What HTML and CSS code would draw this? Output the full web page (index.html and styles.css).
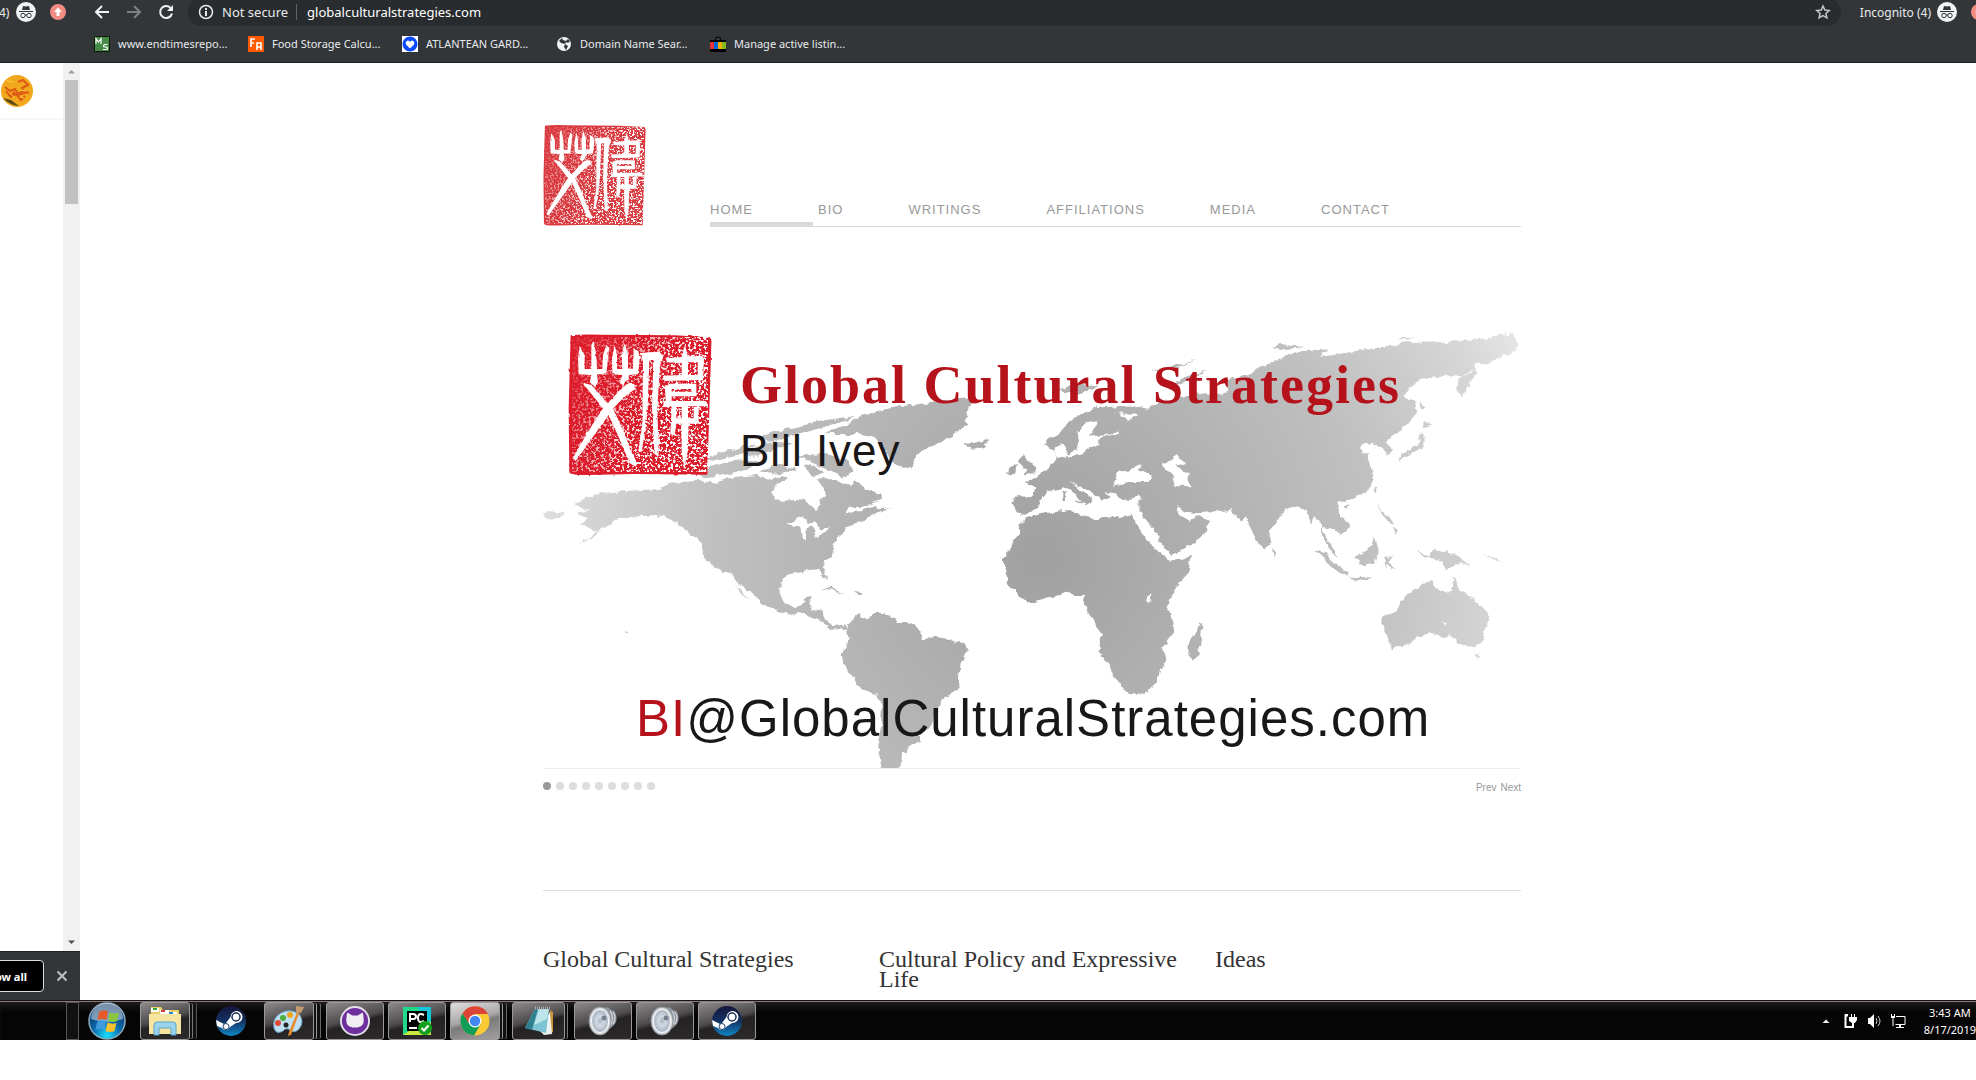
FILE: index.html
```html
<!DOCTYPE html>
<html lang="en">
<head>
<meta charset="utf-8">
<title>Global Cultural Strategies</title>
<link rel="stylesheet" href="styles.css">
</head>
<body>
<svg class="defs" aria-hidden="true">
  <defs>
    <filter id="grain" x="0" y="0" width="100%" height="100%">
      <feTurbulence type="fractalNoise" baseFrequency="0.13" numOctaves="3" seed="8" result="n"/>
      <feColorMatrix in="n" type="matrix" values="0 0 0 0 1  0 0 0 0 1  0 0 0 0 1  9 0 0 0 -4.6"/>
    </filter>
    <filter id="rough" x="-5%" y="-5%" width="110%" height="110%">
      <feTurbulence type="fractalNoise" baseFrequency="0.06" numOctaves="2" seed="3"/>
      <feDisplacementMap in="SourceGraphic" scale="7" xChannelSelector="R" yChannelSelector="G"/>
    </filter>
    <linearGradient id="fade" x1="0" y1="0" x2="1" y2="0.5">
      <stop offset="0.1" stop-color="#fff" stop-opacity="0.15"/>
      <stop offset="0.75" stop-color="#fff"/>
    </linearGradient>
    <mask id="fadeMask"><rect width="432" height="426" fill="url(#fade)"/></mask>
    <symbol id="seal" viewBox="0 0 432 426">
      <path filter="url(#rough)" fill="currentColor" d="M8 4 Q40 0 100 2 L320 4 L424 10 Q432 14 430 30 L424 230 L418 422 L200 420 L60 423 Q4 424 4 414 L2 220Z"/>
      <g mask="url(#fadeMask)"><rect x="12" y="10" width="408" height="404" filter="url(#grain)"/></g>
      <g filter="url(#rough)" transform="translate(-25 -27)" fill="#fff">
        <path d="M60 62L55 100 57 148 95 150 90 172 106 185 115 172 112 148 140 148 145 100 148 68 140 60 130 90 128 132 112 132 110 90 102 48 95 60 95 132 75 132 75 90Z"/>
        <path d="M165 60L157 100 158 148 188 150 180 175 195 180 208 150 235 148 240 100 236 78 222 70 220 132 205 132 205 90 195 52 186 90 188 132 172 132 172 90Z"/>
        <path d="M68 173L95 180 145 235Q170 205 200 178L224 176 226 193Q190 215 160 252 190 310 215 380 232 405 230 425L210 415Q180 340 147 270 90 350 48 408L38 402Q90 310 130 250Z"/>
        <path d="M240 84L300 80 311 95 301 120 293 250 297 390 285 388 277 250 281 105 269 105 264 250 257 320 245 382 236 378 248 300 250 110Z"/>
        <path d="M376 60L385 95 424 92 433 100 430 165 314 168 312 152 366 150 366 114 320 112 322 100 366 96ZM385 112V150H414V112Z"/>
        <path d="M316 185L330 176H410V214H336V228H442V244H385V280H402V246H417V296H387L384 380 374 430 366 380V296H350L345 330 332 328 336 246H310L312 230 318 228ZM336 192V200H396V192ZM350 246V280H366V246Z"/>
      </g>
    </symbol>
    <symbol id="incognito" viewBox="0 0 20 20">
      <circle cx="10" cy="10" r="10" fill="#f1f3f4"/>
      <path d="M3 9h14v1H3zM6 8l1-4 3 .6L13 4l1 4z" fill="#323639"/>
      <g fill="none" stroke="#323639"><circle cx="7" cy="13.500" r="2.200"/><circle cx="13" cy="13.500" r="2.200"/><path d="M9 13h2"/></g>
    </symbol>
    <symbol id="update" viewBox="0 0 16 16">
      <circle cx="8" cy="8" r="8" fill="#f28b82"/>
      <path d="M8 3.500 12 8H9.500v4h-3V8H4z" fill="#fff"/>
    </symbol>
    <linearGradient id="steamFill" x1="0" y1="0" x2="0" y2="1">
      <stop offset="0" stop-color="#14173a"/><stop offset="0.5" stop-color="#123263"/><stop offset="1" stop-color="#0f86c4"/>
    </linearGradient>
    <symbol id="steam" viewBox="0 0 30 30">
      <circle cx="15" cy="15" r="15" fill="url(#steamFill)"/>
      <path d="M0 14 8 18 10 17 14.500 11A6 6 0 1 1 20 17L14 21A4.500 4.500 0 0 1 6 22L1 20Z" fill="#fff"/>
      <circle cx="20" cy="11" r="4" fill="#fff" stroke="#1a2c5a" stroke-width="1.500"/>
      <circle cx="10" cy="20.500" r="3" fill="none" stroke="#1a3c6a"/>
    </symbol>
    <radialGradient id="cone"><stop offset="0" stop-color="#aab3bf"/><stop offset="0.4" stop-color="#d3dae3"/><stop offset="1" stop-color="#a4afbe"/></radialGradient>
    <symbol id="speaker" viewBox="0 0 30 30">
      <path d="M16 2Q20 0 23 4 27 4 28 9 30 16 25 20L18 26Z" fill="#8f959d"/>
      <path d="M22 5Q26 10 23 19M25 6Q29 11 25 18" fill="none" stroke="#e6e8eb"/>
      <ellipse cx="12" cy="15" rx="11" ry="14" fill="#d5d8dc" stroke="#8d9299"/>
      <ellipse cx="12" cy="15" rx="8.500" ry="11.500" fill="url(#cone)" stroke="#fff"/>
      <circle cx="16" cy="12" r="2.500" fill="#77808d"/>
    </symbol>
  </defs>
</svg>

<main class="screen">
  <section class="window side-window" aria-label="Background window">
    <div class="chrome">
      <div class="toolbar side-tools">
        <span class="count">4)</span>
        <svg class="icon20"><use href="#incognito"/></svg>
        <svg class="icon16 side-update"><use href="#update"/></svg>
      </div>
    </div>
    <div class="side-body">
      <div class="side-page">
        <div class="side-head">
          <svg class="avatar" viewBox="0 0 32 32"><circle cx="16" cy="16" r="16" fill="#f2a81d"/><path d="M2 23Q8 30 18 31L10 25Z" fill="#5b4a16"/><g fill="none" stroke="#dd5a12" stroke-width="2"><path d="M4 12l5 4 5-2 3 5 5-3 6 2M17 7l5-2 5 5-6 3 3 5-7 2M9 22l6-3 5 6 4-4M5 16l4 5 5-4"/></g><g fill="none" stroke="#ffd23e"><path d="M6 6l6 1M20 15l5 1M10 19l3 3M19 22l4 1"/></g></svg>
        </div>
      </div>
      <div class="scrollbar">
        <svg class="arrow" viewBox="0 0 17 17"><path d="M5 10.500 8.500 7 12 10.500z" fill="#a0a0a0"/></svg>
        <div class="thumb"></div>
        <svg class="arrow" viewBox="0 0 17 17"><path d="M5 6.500 8.500 10 12 6.500z" fill="#505050"/></svg>
      </div>
    </div>
    <div class="downloads">
      <button class="show-all">Show all</button>
      <button class="plain" aria-label="Close"><svg class="close" viewBox="0 0 12 12"><path d="M1.500 1.500l9 9M10.500 1.500l-9 9" stroke="#bdc1c6" stroke-width="2"/></svg></button>
    </div>
  </section>

  <section class="window main-window" aria-label="Browser">
    <div class="chrome">
      <div class="toolbar">
        <button class="plain" aria-label="Back"><svg class="icon16" viewBox="0 0 16 16"><path d="M15 8H2M8 2 2 8l6 6" fill="none" stroke="#f1f3f4" stroke-width="2"/></svg></button>
        <button class="plain" aria-label="Forward"><svg class="icon16" viewBox="0 0 16 16"><path d="M1 8h13M8 2l6 6-6 6" fill="none" stroke="#7d8084" stroke-width="2"/></svg></button>
        <button class="plain" aria-label="Reload"><svg class="icon16" viewBox="0 0 16 16"><path d="M13 4.500A6 6 0 1 0 14 9.500" fill="none" stroke="#f1f3f4" stroke-width="2"/><path d="M15 1v6H9z" fill="#f1f3f4"/></svg></button>
        <div class="omnibox">
          <svg class="icon16" viewBox="0 0 16 16"><circle cx="8" cy="8" r="6.500" fill="none" stroke="#e8eaed" stroke-width="1.500"/><path d="M7 7h2v5H7zM7 4h2v2H7z" fill="#e8eaed"/></svg>
          <label class="secure" for="address">Not secure</label>
          <input id="address" class="address" value="globalculturalstrategies.com">
          <button class="plain" aria-label="Bookmark"><svg class="icon16" viewBox="0 0 16 16"><path d="M8 2l1.800 4.100 4.400.4-3.300 2.900 1 4.400L8 11.500l-3.900 2.300 1-4.400L1.800 6.500l4.400-.4z" fill="none" stroke="#c4c7ca" stroke-width="1.500"/></svg></button>
        </div>
        <span class="profile">Incognito (4)</span>
        <svg class="icon20"><use href="#incognito"/></svg>
        <svg class="icon16 edge-update"><use href="#update"/></svg>
      </div>
      <nav class="bookmarks" aria-label="Bookmarks">
        <a href="#"><svg class="icon16" viewBox="0 0 16 16"><path d="M.5.500h15v15H.5z" fill="#458b46" stroke="#0c1a0c"/><path d="M2 8V2.500L4.500 6 7 2.500V8M13.500 8.500h-3q-2 1.500 0 2.500h2q2 1.500 0 2.500H9" fill="none" stroke="#fff" stroke-width="1.200"/></svg>www.endtimesrepo...</a>
        <a href="#"><svg class="icon16" viewBox="0 0 16 16"><path d="M0 0h16v16H0z" fill="#fe5a00"/><path d="M3 11V3h4M3 7h3M9 14V7h4v7M9 11h4" fill="none" stroke="#fff" stroke-width="1.600"/></svg>Food Storage Calcu...</a>
        <a href="#"><svg class="icon16" viewBox="0 0 16 16"><path d="M0 0h16v16H0z" fill="#fff"/><circle cx="8" cy="8" r="7.500" fill="#0a4bff"/><path d="M8 12.500 4 8.500Q3 5 6 4.500 7.500 4.500 8 6 8.500 4.500 10 4.500 13 5 12 8.500z" fill="#fff"/></svg>ATLANTEAN GARD...</a>
        <a href="#"><svg class="icon16" viewBox="0 0 16 16"><circle cx="8" cy="8" r="7" fill="#f1f3f4"/><path d="M6 2 3 5l2 2 4 1-1 3 2 3 2-4-3-2 1-2 2 1 2-2-2-2-2 2-3-1z" fill="#323639"/></svg>Domain Name Sear...</a>
        <a href="#"><svg class="icon16" viewBox="0 0 16 16"><path d="M5 4Q5 1 8 1t3 3" fill="none" stroke="#000"/><path d="M0 4h16v12H0z"/><path d="M0 6h4v7H0z" fill="#e53238"/><path d="M4 6h4v7H4z" fill="#0064d2"/><path d="M8 6h4v7H8z" fill="#f5af02"/><path d="M12 6h4v7h-4z" fill="#86b817"/></svg>Manage active listin...</a>
      </nav>
    </div>

    <div class="site">
      <header class="site-head">
        <svg class="logo" viewBox="0 0 432 426" role="img" aria-label="Seal"><use href="#seal"/></svg>
        <nav class="menu" aria-label="Site">
          <a class="current" href="#">HOME</a><a href="#">BIO</a><a href="#">WRITINGS</a><a href="#">AFFILIATIONS</a><a href="#">MEDIA</a><a href="#">CONTACT</a>
        </nav>
      </header>

      <section class="slide">
        <svg class="map" viewBox="9 0 2934 1374" role="img" aria-label="World map">
          <defs>
            <radialGradient id="shade" gradientUnits="userSpaceOnUse" cx="1500" cy="740" r="1650">
              <stop offset="0" stop-color="#a0a0a0"/><stop offset="0.6" stop-color="#c0c0c0"/><stop offset="0.85" stop-color="#d6d6d6"/><stop offset="1" stop-color="#ececec"/>
            </radialGradient>
            <filter id="coast" filterUnits="userSpaceOnUse" x="0" y="0" width="2960" height="1400">
              <feTurbulence type="fractalNoise" baseFrequency="0.035" numOctaves="3" seed="5"/>
              <feDisplacementMap in="SourceGraphic" scale="22" xChannelSelector="R" yChannelSelector="G"/>
            </filter>
            <mask id="land" maskUnits="userSpaceOnUse" x="0" y="0" width="2960" height="1400">
              <g filter="url(#coast)" fill="#fff">
                <path d="M105 583L155 552L190 548L300 540L350 538L400 518L480 512L520 517L590 503L650 498L700 510L720 495L740 505L705 530L697 552L720 572L770 570L805 575L828 603L842 590L835 570L855 555L850 530L835 508L880 508L930 525L945 510L980 538L1022 550L1022 565L975 585L935 590L915 615L960 600L1005 585L1015 598L1055 595L1010 610L970 635L945 640L920 655L895 680L880 705L882 725L850 765L848 775L862 810L850 802L838 778L800 780L760 790L738 795L722 820L722 850L735 878L765 893L790 885L797 862L815 857L808 880L808 900L850 905L855 930L880 948L915 943L922 958L900 952L880 957L850 940L830 922L780 910L740 910L690 898L672 885L640 855L600 825L575 795L520 770L490 745L485 700L450 665L400 635L370 617L320 617L240 622L210 640L180 660L108 712L180 668L150 650L120 645L140 625L105 610L150 600Z"/>
                <path d="M575 800L600 845L632 872L595 835Z"/>
                <path d="M650 385L720 360L840 335L945 320L900 338L800 365L740 380L690 395ZM470 495L505 472L600 448L665 452L640 472L570 490L500 505ZM495 442L560 422L650 402L610 430L520 452ZM600 425L700 395L760 400L700 420L640 440ZM660 480L730 462L770 480L700 492ZM770 440L860 430L920 445L940 482L900 503L880 482L820 460ZM790 462L830 470L850 490L820 500Z"/>
                <path d="M855 372L915 350L960 315L1050 295L1180 275L1290 265L1290 295L1275 330L1285 345L1245 370L1225 385L1165 415L1135 430L1115 475L1075 470L1040 440L1030 410L1010 385L950 372Z"/>
                <path d="M1272 403L1300 398L1350 390L1330 408L1295 417ZM9 603L50 605L75 610L60 624L20 627L9 622ZM845 842L870 833L915 852L880 845ZM935 846L968 850L955 859ZM258 962l8 4l-4 6z"/>
                <path d="M920 945L955 910L965 925L1000 912L1040 912L1075 935L1110 938L1140 960L1145 985L1170 982L1230 990L1275 1002L1282 1020L1262 1060L1255 1130L1240 1150L1205 1172L1190 1220L1165 1255L1140 1270L1140 1295L1105 1308L1105 1325L1085 1330L1085 1355L1070 1390L1025 1390L1015 1340L1020 1290L1025 1200L1015 1155L965 1135L910 1065L905 1035L925 990Z"/>
                <path fill="#000" d="M745 645L775 620L803 630L803 640L828 638L838 655L875 653L830 684L826 665L815 650L800 655L797 692L785 684L781 645Z"/>
                <g transform="translate(1380 0) scale(1.033 1)">
                  <path d="M75 625L130 610L205 600L210 612L280 628L300 620L345 625L385 615L400 650L430 690L470 730L495 755L558 738L545 790L490 865L487 890L510 965L472 1015L482 1050L465 1075L460 1105L435 1140L375 1160L360 1138L325 1090L320 1065L290 1025L290 990L298 975L280 940L248 900L245 855L215 855L195 845L150 865L100 877L60 860L45 840L20 820L20 790L10 750L25 715L55 670L60 640Z"/>
                  <path d="M580 937L587 955L578 1035L562 1045L547 1030L550 975L572 965Z"/>
                  <path d="M42 563L98 556L102 530L70 515L95 512L115 490L155 460L165 445L160 425L140 418L130 395L175 370L210 325L270 295L350 288L400 292L430 300L435 285L520 262L600 250L640 255L665 240L655 215L720 190L800 150L880 124L955 118L930 142L1050 120L1180 100L1300 95L1420 84L1495 68L1498 102L1495 122L1430 154L1385 162L1340 200L1300 195L1220 210L1165 262L1205 270L1210 310L1180 345L1160 365L1130 385L1120 400L1140 420L1130 437L1110 410L1080 398L1045 415L1055 430L1075 430L1065 445L1085 475L1085 500L1065 545L1020 568L985 575L978 595L1010 635L1012 655L990 675L960 655L940 650L945 690L960 700L985 742L965 730L935 685L935 645L915 625L900 637L885 600L862 585L830 600L785 655L782 695L770 722L745 690L720 650L715 620L700 628L670 600L580 610L540 605L515 588L512 600L550 633L580 615L608 635L600 665L560 700L500 738L480 715L440 650L405 600L405 555L380 570L345 565L325 545L300 545L318 560L295 572L265 545L225 525L205 512L240 545L275 565L245 585L230 560L190 530L140 545L110 590L75 617L45 608Z"/>
                  <path d="M1385 160L1375 208L1340 262L1325 235L1330 205L1360 188ZM65 435L80 455L108 475L100 490L65 497L80 480L52 455ZM25 475L48 465L45 488L20 495ZM1218 268L1232 293L1222 300ZM1230 368L1230 410L1175 442L1158 455L1162 435L1210 408L1222 375ZM1228 336L1255 343L1232 355ZM793 713L805 733L796 741ZM918 722L945 732L1010 790L1008 800L975 778ZM1015 800L1080 802L1075 811L1018 808ZM1035 738L1060 725L1090 687L1100 720L1090 765L1045 765ZM1116 745L1142 740L1130 752L1146 776L1125 762L1120 776ZM1100 582L1112 605L1140 630L1136 642L1108 612ZM1138 650L1157 660L1148 674ZM1213 722L1235 732L1250 740L1260 720L1320 732L1360 770L1330 760L1295 774L1270 747L1235 742ZM1088 533L1097 535L1091 550ZM1004 588L1016 586L1008 596ZM1405 732L1430 742L1460 752L1430 748ZM182 542L190 545L188 575L180 572ZM218 575L242 575L236 585Z"/>
                  <path d="M1105 925L1160 895L1185 845L1215 840L1240 812L1262 815L1258 835L1300 850L1312 840L1315 800L1340 840L1370 860L1420 915L1400 990L1380 1008L1335 1005L1308 975L1290 985L1255 968L1210 980L1190 1000L1135 1018L1125 980L1105 940ZM1378 1030L1398 1032L1386 1045Z"/>
                  <path d="M485 230L545 198L605 180L530 220ZM165 242L225 218L285 232L220 252ZM790 112L815 101L885 112L820 118ZM1155 87L1205 78L1180 91ZM440 182L570 152L500 178Z"/>
                  <g fill="#000">
                    <path d="M225 370L250 340L282 333L272 360L258 380L320 374L340 360L347 368L290 385L282 402L240 430L195 443L190 432L225 420L230 395ZM158 420L180 400L194 420L188 445L165 442ZM345 310L402 318L372 332Z"/>
                    <path d="M333 515L345 480L372 482L412 463L405 482L442 500L432 515L380 517L335 530ZM472 465L515 437L542 455L512 470L547 490L550 532L508 528L500 495ZM383 612L405 618L440 665L495 742L560 728L500 753L465 733L425 680ZM426 856L440 854L436 880L427 876ZM1286 932L1300 938L1292 946Z"/>
                  </g>
                </g>
              </g>
            </mask>
          </defs>
          <rect x="0" y="0" width="2960" height="1400" fill="url(#shade)" mask="url(#land)"/>
        </svg>
        <div class="caption">
          <div class="brand">
            <svg class="seal" viewBox="0 0 432 426" aria-hidden="true"><use href="#seal"/></svg>
            <div class="names">
              <h1>Global Cultural Strategies</h1>
              <p class="person">Bill Ivey</p>
            </div>
          </div>
          <p class="email"><span>BI</span>@GlobalCulturalStrategies.com</p>
        </div>
      </section>

      <div class="slider-nav">
        <div class="dots">
          <button class="dot active" aria-label="Slide 1"></button><button class="dot" aria-label="Slide 2"></button><button class="dot" aria-label="Slide 3"></button><button class="dot" aria-label="Slide 4"></button><button class="dot" aria-label="Slide 5"></button><button class="dot" aria-label="Slide 6"></button><button class="dot" aria-label="Slide 7"></button><button class="dot" aria-label="Slide 8"></button><button class="dot" aria-label="Slide 9"></button>
        </div>
        <div class="steps"><a href="#">Prev</a><a href="#">Next</a></div>
      </div>

      <section class="topics">
        <h2>Global Cultural Strategies</h2>
        <h2>Cultural Policy and Expressive Life</h2>
        <h2>Ideas</h2>
      </section>
    </div>
  </section>
</main>

<footer class="taskbar">
  <div class="grip"></div>
  <button class="plain start" aria-label="Start">
    <svg viewBox="0 0 38 38"><defs><radialGradient id="orb" cx="0.5" cy="0.9" r="0.8"><stop offset="0" stop-color="#19e0ff"/><stop offset="0.5" stop-color="#0d67a8"/><stop offset="1" stop-color="#0c3766"/></radialGradient></defs><circle cx="19" cy="19" r="18" fill="url(#orb)" stroke="#8aa9bd" stroke-width="1.500"/><path d="M3 17A16 16 0 0 1 35 17Q19 23 3 17Z" fill="#fff" opacity="0.45"/><path d="M11 10q5-3 9-.5L18.500 18q-4-2-9 0z" fill="#e8592a"/><path d="M21.500 10.500q5 2 9.500 0L29 19q-4 2-9 0z" fill="#8cc63f"/><path d="M9 20q5-3 9-.5L16.500 28q-4-2-9 0z" fill="#3f9be0"/><path d="M19.500 20.500q4 2 9 .5L26.500 29q-4 2-9 0z" fill="#fbc02d"/></svg>
  </button>
  <button class="task stack2" aria-label="Explorer"><svg viewBox="0 0 32 30"><path d="M2 1h10l2 3h16v24H1z" fill="#e9cf6d"/><path d="M2 2h8v4H2zM11 4h9v4h-9zM18 6h10v4H18z" fill="#fff"/><path d="M4 2h4v2H4z" fill="#2ea832"/><path d="M12 4h4v2h-4z" fill="#d93a2b"/><path d="M20 6h4v2h-4z" fill="#2b84d9"/><path d="M0 8h32v20H0z" fill="#f6e5a0"/><path d="M5 29V19q0-3 3-3h16q3 0 3 3v10h-5v-7H10v7z" fill="#9bd3ec" stroke="#5aa5c8"/></svg></button>
  <button class="task pinned" aria-label="Steam"><svg viewBox="0 0 30 30"><use href="#steam"/></svg></button>
  <button class="task stack3" aria-label="Paint"><svg viewBox="0 0 32 30"><path d="M1 22Q-1 12 8 7T26 8q6 8 0 15-5 5-9 1-4-3-7 1-7 4-9-3z" fill="#bfe0f2" stroke="#6ba4c6"/><circle cx="13" cy="19" r="2.500" fill="#222"/><circle cx="5" cy="17" r="3" fill="#e04a36"/><circle cx="10" cy="12" r="3" fill="#4fae3a"/><circle cx="17" cy="9" r="3" fill="#f2a71b"/><path d="M25 4l2 1-9 24-3 1 1-4z" fill="#e98a2e"/><path d="M23 0l8 1-3 6-5-1z" fill="#c59b70"/></svg></button>
  <button class="task" aria-label="GitHub"><svg viewBox="0 0 32 32"><circle cx="16" cy="16" r="15" fill="#6f2f9f" stroke="#e5e0ea" stroke-width="2"/><path d="M8 7l5 3h6l5-3q1 2 1 5 1 5-1 8-2 3-8 3t-8-3q-2-3-1-8 0-3 1-5z" fill="#f0eef2"/></svg></button>
  <button class="task" aria-label="PyCharm"><svg viewBox="0 0 30 30"><path d="M1 1h28v28H1z" fill="#21d789"/><path d="M15 1h14v16z" fill="#14c6dc"/><path d="M1 29 15 20l14-4v13z" fill="#c9ea3c"/><path d="M5 5h20v20H5z" fill="#000"/><path d="M8 16V8h3q3 0 3 2.500T11 13H8M22 9q-6-3-6 3t6 3M7 22h8" fill="none" stroke="#fff" stroke-width="2"/><circle cx="23" cy="22" r="7" fill="#14a01c"/><path d="M19.500 22l2.500 2.500 4.500-5" fill="none" stroke="#fff" stroke-width="2"/></svg></button>
  <button class="task stack3 lit" aria-label="Chrome"><svg viewBox="0 0 30 30"><circle cx="15" cy="15" r="14.500" fill="#fbc934"/><path d="M2.500 7.500A14.500 14.500 0 0 1 28 8H15l-6.500 9.500z" fill="#db4437"/><path d="M2.500 7.500A14.500 14.500 0 0 0 14 29.500l7-12H9z" fill="#0f9d58"/><circle cx="15" cy="15" r="6.500" fill="#fff"/><circle cx="15" cy="15" r="5.200" fill="#4285f4"/></svg></button>
  <button class="task stack1" aria-label="Notepad"><svg viewBox="0 0 30 30"><path d="M26 4l3 2v20l-4 2z" fill="#c8943c"/><path d="M26 6l2 22-8 1-5-5z" fill="#eef2f3"/><path d="M11 3h14l-3 24L1 22z" fill="#7fc4d3"/><path d="M11 3h3L8 24l-7-2z" fill="#2f8190"/><path d="M15 3h10l-2 10-13 6z" fill="#bfe5ec"/><path d="M11 2h15" stroke="#a9a9a9" stroke-width="3" stroke-dasharray="1 1"/></svg></button>
  <button class="task" aria-label="Sound"><svg viewBox="0 0 30 30"><use href="#speaker"/></svg></button>
  <button class="task" aria-label="Sound settings"><svg viewBox="0 0 30 30"><use href="#speaker"/></svg></button>
  <button class="task" aria-label="Steam window"><svg viewBox="0 0 30 30"><use href="#steam"/></svg></button>
  <div class="tray">
    <svg class="icon16" viewBox="0 0 16 16"><path d="M4.500 10 8 6.500l3.500 3.500z" fill="#e6edf5"/></svg>
    <svg class="icon16" viewBox="0 0 16 16"><path d="M6 2.500H3.500V14h7" fill="none" stroke="#fff" stroke-width="2"/><path d="M3 1h3v2H3zM9 1h1v3H9zM12 1h1v3h-1zM7 4h8v3l-2 3h-1v5h-2v-5L7 8z" fill="#fff"/></svg>
    <svg class="icon16" viewBox="0 0 16 16"><path d="M2 5h2l4-4v14l-4-4H2z" fill="#fff"/><path d="M10 5q2 3 0 6M12 3q4 5 0 10" fill="none" stroke="#ccc"/></svg>
    <svg class="icon16" viewBox="0 0 16 16"><path d="M6 3.500h9v8H5.500" fill="none" stroke="#fff"/><path d="M1 1h1v2h2V1h1v4H3.500v8h-1V5H1zM6 14h8v1H6zM9 12h2v2H9z" fill="#fff"/></svg>
    <div class="clock"><span>3:43 AM</span><span>8/17/2019</span></div>
  </div>
</footer>
</body>
</html>
```
FILE: styles.css
```css
* { box-sizing: border-box; }
body { margin: 0; background: #fff; font-family: "Liberation Sans", Arial, sans-serif; overflow-x: hidden; }
h1, h2, p { margin: 0; font-weight: normal; }
a { color: inherit; text-decoration: none; }
svg { display: block; flex: none; }
.defs { position: absolute; width: 0; height: 0; }
.plain { padding: 0; border: 0; background: none; display: block; flex: none; }
.icon16 { width: 16px; height: 16px; }
.icon20 { width: 20px; height: 20px; }

.screen { display: grid; grid-template-columns: 80px minmax(0, 1fr); }
.window { display: flex; flex-direction: column; overflow: hidden; min-width: 0; }

/* Browser frame */
.chrome { height: 63px; flex: none; background: #323639; border-bottom: 1px solid #202124; font-family: "Noto Sans", "Open Sans", sans-serif; color: #e8eaed; }
.toolbar { display: flex; align-items: center; height: 24px; padding-left: 14px; gap: 16px; }
.toolbar > * { flex: none; }
.toolbar .omnibox { display: flex; align-items: center; flex: 1 1 0; min-width: 0; height: 28px; padding: 0 10px; gap: 8px; border-radius: 14px; background: #292c2f; margin-right: 3px; margin-left: -2px; }
.secure { padding-right: 8px; border-right: 1px solid #5f6368; font-size: 13px; line-height: 16px; white-space: nowrap; }
.address { flex: 1; min-width: 0; padding: 0 0 0 2px; border: 0; outline: 0; background: none; color: #fff; font: 13px "Noto Sans", "Open Sans", sans-serif; }
.profile { font-size: 12px; margin-right: -10px; white-space: nowrap; }
.edge-update { margin: 0 -11px 0 -2px; }
.bookmarks { display: flex; height: 39px; align-items: center; padding-left: 14px; font-size: 11px; }
.bookmarks a { display: flex; align-items: center; gap: 8px; width: 154px; flex: none; white-space: nowrap; }

/* Background window */
.side-tools { padding-left: 0; gap: 0; }
.count { width: 17px; font-size: 12px; margin-left: -1px; }
.side-update { margin-left: 14px; }
.side-body { flex: 1; display: flex; }
.side-page { flex: 1; }
.side-head { height: 57px; padding: 12px 0 0 1px; border-bottom: 2px solid #f6f6f6; }
.avatar { width: 32px; height: 32px; }
.scrollbar { width: 17px; background: #f1f1f1; display: flex; flex-direction: column; justify-content: space-between; }
.arrow { width: 17px; height: 17px; }
.thumb { width: 13px; height: 124px; margin: 0 2px auto; background: #c1c1c1; }
.downloads { height: 49px; background: #323639; border-top: 1px solid #202124; display: flex; align-items: center; justify-content: flex-end; gap: 12px; padding-right: 12px; }
.show-all { flex: none; height: 32px; padding: 0 16px; border: 1px solid #dadce0; border-radius: 4px; background: #000; color: #fff; font: bold 11px "Noto Sans", "Open Sans", sans-serif; }
.close { width: 12px; height: 12px; }

/* Site */
.site { width: 100%; max-width: 986px; margin: 0 auto; padding: 61px 0 11px 8px; }
.site-head { display: flex; align-items: flex-end; gap: 64px; }
.logo { width: 103px; height: 103px; color: #da3a40; }
.menu { flex: 1; display: flex; gap: 65px; border-bottom: 1px solid #d8d8d8; color: #999; font-size: 13px; line-height: 15px; letter-spacing: 1px; }
.menu a { padding-bottom: 9px; }
.menu .current { position: relative; }
.current::after { content: ""; position: absolute; left: 0; bottom: 0; width: 103px; height: 4px; background: #dadada; }
.slide { position: relative; margin-top: 83px; border-bottom: 1px solid #eee; }
.map { width: 100%; height: auto; }
.caption { position: absolute; inset: 0; padding: 24px 0 0 25px; }
.brand { display: flex; gap: 28px; }
.seal { width: 144px; height: 142px; color: #dc1f2b; }
.names { padding-top: 21px; }
h1 { font: bold 54px/60px "Liberation Serif", "Times New Roman", serif; letter-spacing: 2px; color: #b5121b; white-space: nowrap; }
.person { margin-top: 11px; font-size: 44px; line-height: 50px; letter-spacing: 1px; color: #1a1718; }
.email { margin: 213px 0 0 68px; font-size: 51px; line-height: 60px; letter-spacing: 1px; color: #1a1718; white-space: nowrap; }
.email span { color: #b5121b; }
.slider-nav { display: flex; justify-content: space-between; padding-top: 13px; height: 121px; }
.dots { display: flex; gap: 5px; }
.dot { width: 8px; height: 8px; padding: 0; border: 0; border-radius: 50%; background: #ddd; }
.dot.active { background: #999; }
.steps { display: flex; gap: 4px; font-size: 10px; line-height: 12px; color: #999; }
.topics { display: grid; grid-template-columns: repeat(3, minmax(0, 306px)); gap: 30px; border-top: 1px solid #ddd; padding-top: 58px; }
h2 { font: 24px/20px "Liberation Serif", Georgia, serif; color: #333; }

/* Taskbar */
.taskbar { display: flex; align-items: center; height: 40px; margin-bottom: 40px; padding-left: 66px; background: #060505; border-top: 1px solid #1a1416; box-shadow: inset 0 1px #85797c, inset 0 8px 8px -4px #2a2324; overflow: hidden; }
.grip { width: 13px; height: 38px; border: 1px solid #5a5557; background: #111; }
.start { margin: 0 14px 0 9px; }
.start svg { width: 38px; height: 38px; }
.task { position: relative; flex: none; width: 58px; height: 38px; margin-right: 4px; padding: 0; display: flex; align-items: center; justify-content: center; border: 1px solid #9b9899; border-radius: 3px; background: linear-gradient(165deg, #8d898a 0, #4e4b4c 45%, #242223 55%, #2c2a2b 100%); }
.task svg { width: 32px; height: 30px; }
.task.pinned { border-color: transparent; background: none; }
.task.lit { background: linear-gradient(165deg, #e0dede 0, #a9a7a8 45%, #7d7a7b 55%, #a19fa0 100%); }
.task.stack1 { width: 53px; margin-right: 9px; box-shadow: 3px 0 0 -1px #111, 4px 0 0 -1px #777; }
.task.stack2 { width: 50px; margin-right: 12px; box-shadow: 3px 0 0 -1px #111, 4px 0 0 -1px #777, 7px 0 0 -1px #111, 8px 0 0 -1px #555; }
.task.stack3 { width: 50px; margin-right: 12px; box-shadow: 3px 0 0 -1px #111, 4px 0 0 -1px #999, 7px 0 0 -1px #111, 8px 0 0 -1px #666; }
.tray { display: flex; align-items: center; gap: 8px; margin-left: auto; flex: none; }
.clock { display: flex; flex-direction: column; align-items: center; margin-left: 10px; color: #fff; font: 11px/17px "Noto Sans", "Open Sans", sans-serif; }
```
